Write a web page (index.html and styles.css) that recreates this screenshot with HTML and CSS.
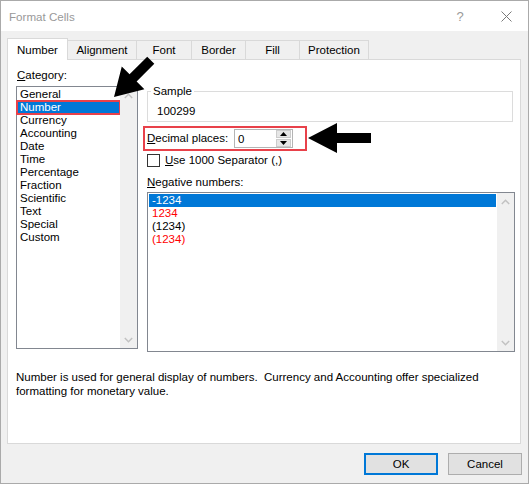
FILE: index.html
```html
<!DOCTYPE html>
<html>
<head>
<meta charset="utf-8">
<link rel="stylesheet" href="styles.css">
</head>
<body>
<div class="window">
  <div class="titlebar">
    <span class="title">Format Cells</span>
    <span class="help">?</span>
    <svg class="close" width="11" height="11" viewBox="0 0 11 11"><path d="M0.5 0.5 L10.5 10.5 M10.5 0.5 L0.5 10.5" stroke="#7a7a7a" stroke-width="1" fill="none"/></svg>
  </div>
  <div class="client">
    <div class="tabs">
      <div class="tab sel w1">Number</div>
      <div class="tab w2">Alignment</div>
      <div class="tab w3">Font</div>
      <div class="tab w4">Border</div>
      <div class="tab w5">Fill</div>
      <div class="tab w6">Protection</div>
    </div>
    <div class="panel">
      <div class="top">
        <div class="catcol">
          <div class="lbl cat-lbl"><u>C</u>ategory:</div>
          <div class="list cat">
            <div class="items">
              <div class="item">General</div>
              <div class="item hl num">Number</div>
              <div class="item">Currency</div>
              <div class="item">Accounting</div>
              <div class="item">Date</div>
              <div class="item">Time</div>
              <div class="item">Percentage</div>
              <div class="item">Fraction</div>
              <div class="item">Scientific</div>
              <div class="item">Text</div>
              <div class="item">Special</div>
              <div class="item">Custom</div>
            </div>
            <div class="sb">
              <div class="sb-arrow"><svg width="9" height="6" viewBox="0 0 9 6"><polyline points="0.8,5 4.5,1.3 8.2,5" fill="none" stroke="#c2c2c2" stroke-width="1.5"/></svg></div>
              <div class="sb-arrow"><svg width="9" height="6" viewBox="0 0 9 6"><polyline points="0.8,1 4.5,4.7 8.2,1" fill="none" stroke="#c2c2c2" stroke-width="1.5"/></svg></div>
            </div>
          </div>
        </div>
        <div class="rcol">
          <fieldset class="sample">
            <legend>Sample</legend>
            <div class="sval">100299</div>
          </fieldset>
          <div class="dec">
            <span class="dec-lbl"><u>D</u>ecimal places:</span>
            <div class="spin">
              <span class="val">0</span>
              <div class="btns">
                <div class="sbtn"><svg width="7" height="4" viewBox="0 0 7 4"><polygon points="3.5,0 7,4 0,4" fill="#000"/></svg></div>
                <div class="sbtn"><svg width="7" height="4" viewBox="0 0 7 4"><polygon points="0,0 7,0 3.5,4" fill="#000"/></svg></div>
              </div>
            </div>
          </div>
          <div class="chk-row">
            <span class="box"></span>
            <span><u>U</u>se 1000 Separator (,)</span>
          </div>
          <div class="lbl neg-lbl"><u>N</u>egative numbers:</div>
          <div class="list neg">
            <div class="items">
              <div class="item hl">-1234</div>
              <div class="item red">1234</div>
              <div class="item">(1234)</div>
              <div class="item red">(1234)</div>
            </div>
            <div class="sb">
              <div class="sb-arrow"><svg width="9" height="6" viewBox="0 0 9 6"><polyline points="0.8,5 4.5,1.3 8.2,5" fill="none" stroke="#c2c2c2" stroke-width="1.5"/></svg></div>
              <div class="sb-arrow"><svg width="9" height="6" viewBox="0 0 9 6"><polyline points="0.8,1 4.5,4.7 8.2,1" fill="none" stroke="#c2c2c2" stroke-width="1.5"/></svg></div>
            </div>
          </div>
        </div>
      </div>
      <p class="desc">Number is used for general display of numbers.&nbsp; Currency and Accounting offer specialized<br>formatting for monetary value.</p>
    </div>
    <div class="buttons">
      <button class="btn ok">OK</button>
      <button class="btn">Cancel</button>
    </div>
  </div>
</div>
<svg class="annot" width="530" height="484" viewBox="0 0 530 484">
  <polygon points="308,138 337,123 337,133 371,133 371,143 337,143 337,153" fill="#000"/>
  <polygon transform="translate(114,97) rotate(-45)" points="0,0 27,-16 27,-5 52,-5 52,5 27,5 27,16" fill="#000"/>
</svg>
</body>
</html>
```

FILE: styles.css
```css
html, body {
  margin: 0;
  padding: 0;
}
body {
  width: 530px;
  height: 484px;
  overflow: hidden;
  position: relative;
  background: #ffffff;
  font-family: "Liberation Sans", Arial, sans-serif;
  font-size: 11.5px;
  color: #000;
}
.window {
  width: 529px;
  height: 484px;
  box-sizing: border-box;
  border: 1px solid #aaaaaa;
  background: #fff;
  display: flex;
  flex-direction: column;
}
.titlebar {
  height: 30px;
  flex: none;
  display: flex;
  align-items: center;
  padding: 0 16px 0 8px;
  background: #fff;
}
.title {
  flex: 1;
  color: #999;
  font-size: 11.6px;
  padding-top: 1px;
}
.help {
  width: 20px;
  text-align: center;
  color: #999;
  font-size: 13px;
}
.close {
  margin-left: 31px;
  display: block;
}
.client {
  flex: 1;
  background: #f0f0f0;
  display: flex;
  flex-direction: column;
}
.tabs {
  display: flex;
  align-items: flex-end;
  height: 21px;
  margin: 7px 0 0 6px;
}
.tab {
  box-sizing: border-box;
  height: 19px;
  border: 1px solid #d9d9d9;
  border-bottom: none;
  background: #f0f0f0;
  text-align: center;
  padding-top: 2px;
  line-height: 15px;
  margin-left: -1px;
}
.tab.sel {
  height: 22px;
  margin-bottom: -1px;
  margin-left: 0;
  padding-top: 4px;
  background: #fff;
  position: relative;
  z-index: 1;
}
.w1 { width: 61px; }
.w2 { width: 70px; }
.w3 { width: 56px; }
.w4 { width: 55px; }
.w5 { width: 55px; }
.w6 { width: 70px; }
.panel {
  box-sizing: border-box;
  height: 385px;
  margin: 0 7px 0 6px;
  border: 1px solid #d9d9d9;
  background: #fff;
  padding: 8px 0 0 8px;
}
.top {
  display: flex;
  align-items: flex-start;
}
.catcol {
  width: 122px;
}
.lbl {
  line-height: 15px;
  height: 15px;
}
.cat-lbl {
  padding-left: 1px;
}
.list {
  box-sizing: border-box;
  border: 1px solid #828790;
  display: flex;
  background: #fff;
}
.cat {
  margin-top: 3px;
  height: 263px;
}
.items {
  flex: 1;
  padding-top: 1px;
}
.neg .items {
  padding: 1px 1px 0 1px;
}
.item {
  height: 13px;
  line-height: 13px;
  padding-left: 3px;
  white-space: nowrap;
}
.hl {
  background: #0078d7;
  color: #fff;
}
.num {
  outline: 2px solid #e8414a;
  outline-offset: -1px;
}
.red {
  color: #ff0000;
}
.sb {
  width: 17px;
  background: #f0f0f0;
  display: flex;
  flex-direction: column;
  justify-content: space-between;
}
.sb-arrow {
  height: 17px;
  display: flex;
  align-items: center;
  justify-content: center;
}
.sb-arrow svg {
  display: block;
}
.rcol {
  margin-left: 9px;
  width: 368px;
  padding-top: 16px;
}
.sample {
  margin: 0;
  padding: 0 0 2px 3px;
  border: 1px solid #dcdcdc;
  width: 366px;
  box-sizing: border-box;
  min-width: 0;
}
.sample legend {
  padding: 0 2px;
  line-height: 15px;
}
.sval {
  margin: 5px 0 0 6px;
  line-height: 15px;
}
.dec {
  margin: 4px 0 0 -4px;
  width: 164px;
  height: 25px;
  box-sizing: border-box;
  border: 2px solid #e8414a;
  display: flex;
  align-items: center;
  padding-left: 2px;
}
.dec-lbl {
  width: 87px;
  line-height: 15px;
}
.spin {
  width: 59px;
  height: 19px;
  box-sizing: border-box;
  border: 1px solid #b4b4b4;
  display: flex;
  align-items: center;
  background: #fff;
}
.val {
  flex: 1;
  padding-left: 3px;
}
.btns {
  width: 15px;
  height: 17px;
  margin-right: 1px;
  display: flex;
  flex-direction: column;
  gap: 1px;
}
.sbtn {
  flex: 1;
  box-sizing: border-box;
  background: #e6e6e6;
  border: 1px solid #cccccc;
  display: flex;
  align-items: center;
  justify-content: center;
}
.sbtn svg {
  display: block;
}
.chk-row {
  display: flex;
  align-items: center;
  margin-top: 3px;
  height: 13px;
  line-height: 15px;
}
.box {
  width: 13px;
  height: 13px;
  box-sizing: border-box;
  border: 1px solid #333;
  background: #fff;
  margin-right: 5px;
}
.neg-lbl {
  margin-top: 8px;
}
.neg {
  margin-top: 2px;
  height: 160px;
}
.desc {
  margin: 18px 0 0 0;
  line-height: 14px;
}
.buttons {
  display: flex;
  justify-content: flex-end;
  gap: 10px;
  margin: 9px 6px 0 0;
}
.btn {
  width: 74px;
  height: 22px;
  box-sizing: border-box;
  border: 1px solid #adadad;
  background: #e1e1e1;
  font: inherit;
  color: #000;
  padding: 0;
}
.btn.ok {
  border: 2px solid #0078d7;
}
.annot {
  position: absolute;
  left: 0;
  top: 0;
  pointer-events: none;
}
```
